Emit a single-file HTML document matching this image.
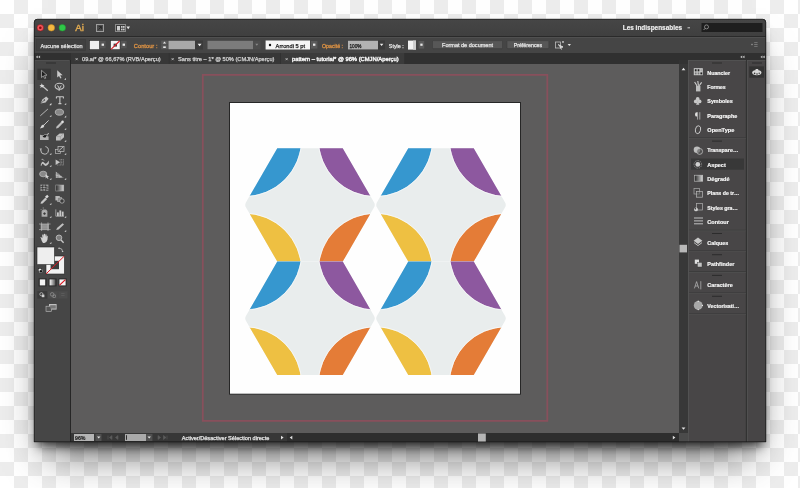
<!DOCTYPE html>
<html><head><meta charset="utf-8">
<style>
html,body{margin:0;padding:0;width:800px;height:488px;overflow:hidden;}
body{background-color:#fff;background-image:
linear-gradient(45deg,#ededed 25%,transparent 25%,transparent 75%,#ededed 75%),
linear-gradient(45deg,#ededed 25%,transparent 25%,transparent 75%,#ededed 75%);
background-size:28px 28px;background-position:0 0,14px 14px;position:relative;}
#shadow{position:absolute;left:34px;top:19px;width:732px;height:423px;
box-shadow:0 8px 10px -4px rgba(0,0,0,0.75), 0 24px 40px -14px rgba(0,0,0,0.65);background:#333;border-radius:4px 4px 0 0;}
svg{position:absolute;left:0;top:0;will-change:transform;}
</style></head><body>
<div id="shadow"></div>
<svg width="800" height="488" viewBox="0 0 800 488">
<defs>
<clipPath id="win"><path d="M34,22.5 Q34,19 37.5,19 L762.5,19 Q766,19 766,22.5 L766,442 L34,442 Z"/></clipPath>
<linearGradient id="tb" x1="0" y1="0" x2="0" y2="1"><stop offset="0" stop-color="#464646"/><stop offset="1" stop-color="#3f3f3f"/></linearGradient>
</defs>
<g clip-path="url(#win)">
<rect x="34" y="19" width="732" height="18" fill="url(#tb)" />
<rect x="34" y="19" width="732" height="1" fill="#5a5a5a" opacity="0.5"/>
<rect x="34" y="36" width="732" height="1" fill="#2a2a2a" />
<rect x="34" y="37" width="732" height="16" fill="#454545" />
<rect x="34" y="37" width="732" height="1" fill="#505050" />
<rect x="34" y="53" width="732" height="7" fill="#303030" />
<rect x="71" y="53" width="608" height="11" fill="#303030" />
<rect x="71" y="64" width="608" height="369" fill="#5d5c5c" />
<rect x="34" y="60" width="36" height="382" fill="#464646" />
<rect x="70" y="60" width="1" height="382" fill="#262626" />
<rect x="679" y="64" width="9" height="369" fill="#383838" />
<rect x="71" y="433" width="608" height="9" fill="#373737" />
<rect x="287" y="433" width="392" height="9" fill="#2e2e2e" />
<rect x="679" y="433" width="9" height="9" fill="#4b4b4b" />
<rect x="688" y="60" width="58" height="382" fill="#484647" />
<rect x="745.8" y="60" width="1.4" height="382" fill="#323232" />
<rect x="747" y="60" width="19" height="382" fill="#474546" />
<rect x="35" y="60" width="34" height="0.7" fill="#555555" />
<rect x="34.5" y="60" width="0.7" height="382" fill="#505050" />
<rect x="688" y="60" width="0.8" height="382" fill="#565656" />
<rect x="688" y="60" width="58" height="0.7" fill="#565656" />
<rect x="747" y="60" width="0.7" height="382" fill="#555555" />
<rect x="747" y="60" width="19" height="0.7" fill="#555555" />
</g>
<path d="M34.25,442 L34.25,22.5 Q34.25,19.25 37.5,19.25 L762.5,19.25 Q765.75,19.25 765.75,22.5 L765.75,442" fill="none" stroke="#1c1c1c" stroke-width="0.8"/>
<rect x="34" y="441.4" width="732" height="0.8" fill="#1c1c1c" />
<circle cx="40.3" cy="27.8" r="3.3" fill="#f2555a" stroke="#8a0c10" stroke-width="0.5"/>
<circle cx="51.3" cy="27.8" r="3.3" fill="#f5b841" stroke="#c98a1a" stroke-width="0.5"/>
<circle cx="62.3" cy="27.8" r="3.3" fill="#2fc748" stroke="#1c9a2f" stroke-width="0.5"/>
<circle cx="40.3" cy="27.8" r="1.3" fill="#8a0c10"/>
<text x="75.2" y="31.3" font-size="9.4" fill="#dca750" font-weight="normal" text-anchor="start" font-family="Liberation Sans" textLength="8.6" lengthAdjust="spacingAndGlyphs" stroke="#dca750" stroke-width="0.45">Ai</text>
<rect x="96.5" y="24.5" width="7" height="7" fill="#4a4a4a" stroke="#9c9c9c" stroke-width="1"/>
<path d="M98.4,29.6 L101.4,26.6 M98.8,26.6 L101.4,26.6 L101.4,29.2" stroke="#262626" stroke-width="0.9" fill="none"/>
<rect x="115.5" y="24.5" width="10" height="7" fill="#3a3a3a" stroke="#8a8a8a" stroke-width="1"/>
<rect x="117" y="26" width="3" height="4.5" fill="#cfcfcf"/>
<rect x="121" y="26" width="1.6" height="1.8" fill="#cfcfcf"/><rect x="123" y="26" width="1.6" height="1.8" fill="#cfcfcf"/>
<rect x="121" y="28.6" width="1.6" height="1.8" fill="#cfcfcf"/><rect x="123" y="28.6" width="1.6" height="1.8" fill="#cfcfcf"/>
<path d="M126.4,26.6 L130,26.6 L128.2,29.2 Z" fill="#e6e6e6"/>
<text x="622.7" y="30" font-size="6.4" fill="#f0f0f0" font-weight="bold" text-anchor="start" font-family="Liberation Sans" textLength="59.5" lengthAdjust="spacingAndGlyphs" stroke="#f0f0f0" stroke-width="0.15">Les indispensables</text>
<rect x="687.5" y="27.3" width="2.5" height="1" fill="#cccccc"/>
<rect x="701.5" y="23" width="61" height="9" fill="#1e1e1e"/>
<circle cx="706.5" cy="26.9" r="2" fill="none" stroke="#9a9a9a" stroke-width="0.8"/><path d="M705,28.4 L703.6,30" stroke="#9a9a9a" stroke-width="0.9"/>
<rect x="36.5" y="39.5" width="49" height="11" fill="#404040" stroke="#3c3c3c" stroke-width="0.8"/>
<text x="40.6" y="47.6" font-size="5.9" fill="#e4e4e4" font-weight="normal" text-anchor="start" font-family="Liberation Sans" textLength="42" lengthAdjust="spacingAndGlyphs" stroke="#e4e4e4" stroke-width="0.25">Aucune sélection</text>
<rect x="89.5" y="40.5" width="10" height="9.2" fill="#efefef" stroke="#2a2a2a" stroke-width="0.6"/>
<rect x="100" y="41" width="5.6" height="7.3" fill="#555"/><rect x="101.6" y="43.6" width="2.4" height="2.2" fill="#e8e8e8"/>
<rect x="110.5" y="40.5" width="9.6" height="9.2" fill="#f4f4f4" stroke="#2a2a2a" stroke-width="0.6"/>
<rect x="113.6" y="43.6" width="3.4" height="3" fill="#444"/>
<path d="M111,49.3 L119.6,41" stroke="#d8202a" stroke-width="1.1"/>
<rect x="121" y="41" width="5.6" height="7.3" fill="#555"/><rect x="122.6" y="43.6" width="2.4" height="2.2" fill="#e8e8e8"/>
<text x="133.8" y="47.6" font-size="5.9" fill="#dc9244" font-weight="normal" text-anchor="start" font-family="Liberation Sans" textLength="23.7" lengthAdjust="spacingAndGlyphs" stroke="#dc9244" stroke-width="0.3">Contour :</text>
<rect x="161.2" y="40.6" width="6.6" height="4" fill="#5a5a5a"/><rect x="161.2" y="45.2" width="6.6" height="4" fill="#5a5a5a"/>
<path d="M162.9,43.6 L166.1,43.6 L164.5,41.6 Z" fill="#e8e8e8"/><rect x="163.2" y="46.4" width="2.6" height="1.6" fill="#e8e8e8"/>
<rect x="168.5" y="40.8" width="26.6" height="8.4" fill="#a9a9a9" />
<rect x="195" y="40.5" width="8" height="9" fill="#3b3b3b" />
<path d="M197.6,43.8 L201.6,43.8 L199.6,46.2 Z" fill="#f0f0f0"/>
<rect x="207.5" y="40.8" width="45.5" height="8.4" fill="#7c7c7c" />
<rect x="253" y="40.5" width="7.6" height="9" fill="#4d4d4d" />
<path d="M255.3,43.8 L258.3,43.8 L256.8,45.8 Z" fill="#8a8a8a"/>
<rect x="265.6" y="40.5" width="44.4" height="9" fill="#f6f6f6" />
<circle cx="270" cy="45" r="1.2" fill="#111"/>
<text x="275.6" y="47.7" font-size="5.9" fill="#1a1a1a" font-weight="normal" text-anchor="start" font-family="Liberation Sans" textLength="29.5" lengthAdjust="spacingAndGlyphs" stroke="#1a1a1a" stroke-width="0.25">Arrondi 5 pt</text>
<rect x="311" y="41" width="6.4" height="7.6" fill="#5a5a5a" />
<rect x="313" y="43.6" width="2.4" height="2.2" fill="#e8e8e8"/>
<text x="322" y="47.7" font-size="5.9" fill="#dc9244" font-weight="normal" text-anchor="start" font-family="Liberation Sans" textLength="21" lengthAdjust="spacingAndGlyphs" stroke="#dc9244" stroke-width="0.3">Opacité :</text>
<rect x="348" y="40.8" width="30" height="8.6" fill="#b3b3b3" />
<text x="349.5" y="47.7" font-size="5.9" fill="#111" font-weight="normal" text-anchor="start" font-family="Liberation Sans" textLength="12" lengthAdjust="spacingAndGlyphs" stroke="#111" stroke-width="0.25">100%</text>
<rect x="378" y="40.5" width="7" height="9" fill="#3b3b3b" />
<path d="M379.8,43.8 L383.4,43.8 L381.6,46 Z" fill="#f0f0f0"/>
<text x="388.8" y="47.7" font-size="5.9" fill="#e4e4e4" font-weight="normal" text-anchor="start" font-family="Liberation Sans" textLength="15" lengthAdjust="spacingAndGlyphs" stroke="#e4e4e4" stroke-width="0.25">Style :</text>
<rect x="408" y="40.6" width="8" height="9" fill="#f2f2f2"/><rect x="413" y="40.6" width="3" height="9" fill="#cfcfcf"/>
<rect x="418.6" y="41" width="5.6" height="7.6" fill="#5a5a5a" />
<rect x="420.3" y="43.6" width="2.3" height="2.2" fill="#e8e8e8"/>
<rect x="432.5" y="40.6" width="70" height="8" rx="0.8" fill="#575757" stroke="#3a3a3a" stroke-width="0.5"/>
<text x="467.5" y="47.4" font-size="5.9" fill="#e6e6e6" font-weight="normal" text-anchor="middle" font-family="Liberation Sans" textLength="51" lengthAdjust="spacingAndGlyphs" stroke="#e6e6e6" stroke-width="0.25">Format de document</text>
<rect x="507" y="40.6" width="41.8" height="8" rx="0.8" fill="#575757" stroke="#3a3a3a" stroke-width="0.5"/>
<text x="527.9" y="47.4" font-size="5.9" fill="#e6e6e6" font-weight="normal" text-anchor="middle" font-family="Liberation Sans" textLength="28.5" lengthAdjust="spacingAndGlyphs" stroke="#e6e6e6" stroke-width="0.25">Préférences</text>
<rect x="555.5" y="42" width="5" height="6" fill="none" stroke="#bdbdbd" stroke-width="0.8"/><path d="M558,44.5 L563,47 L560.5,47.5 L561.5,49.5" stroke="#e0e0e0" stroke-width="0.9" fill="#cfcfcf"/>
<rect x="562" y="41.2" width="2" height="1.5" fill="#bdbdbd"/>
<path d="M567.6,44 L571,44 L569.3,46 Z" fill="#e0e0e0"/>
<path d="M751,44.5 L753,44.5 M754.2,42.6 L757.6,42.6 M754.2,44.5 L757.6,44.5 M754.2,46.4 L757.6,46.4 M752,43.6 L752,45.4" stroke="#8c8c8c" stroke-width="0.7"/>
<rect x="71" y="53" width="98.5" height="11" fill="#373737" />
<rect x="168.9" y="53" width="0.6" height="11" fill="#2e2e2e" />
<path d="M75.6,58.1 L77.7,60.2 M77.7,58.1 L75.6,60.2" stroke="#cfcfcf" stroke-width="0.75"/>
<text x="82" y="61.3" font-size="5.7" fill="#d4d4d4" font-weight="normal" text-anchor="start" font-family="Liberation Sans" textLength="78.7" lengthAdjust="spacingAndGlyphs" stroke="#d4d4d4" stroke-width="0.25">09.ai* @ 66,67% (RVB/Aperçu)</text>
<rect x="169.5" y="53" width="111.5" height="11" fill="#373737" />
<rect x="280.4" y="53" width="0.6" height="11" fill="#2e2e2e" />
<path d="M171.6,58.1 L173.7,60.2 M173.7,58.1 L171.6,60.2" stroke="#cfcfcf" stroke-width="0.75"/>
<text x="178" y="61.3" font-size="5.7" fill="#d4d4d4" font-weight="normal" text-anchor="start" font-family="Liberation Sans" textLength="96.5" lengthAdjust="spacingAndGlyphs" stroke="#d4d4d4" stroke-width="0.25">Sans titre – 1* @ 50% (CMJN/Aperçu)</text>
<rect x="281" y="53" width="124" height="11" fill="#3b3b3b" />
<rect x="404.4" y="53" width="0.6" height="11" fill="#2e2e2e" />
<path d="M285.6,58.1 L287.7,60.2 M287.7,58.1 L285.6,60.2" stroke="#cfcfcf" stroke-width="0.75"/>
<text x="292" y="61.3" font-size="5.7" fill="#f4f4f4" font-weight="normal" text-anchor="start" font-family="Liberation Sans" textLength="106.7" lengthAdjust="spacingAndGlyphs" stroke="#f4f4f4" stroke-width="0.4">pattern – tutorial* @ 96% (CMJN/Aperçu)</text>
<path d="M35.8,56.9 L37.8,55.5 L37.8,58.3 Z M38.099999999999994,56.9 L40.099999999999994,55.5 L40.099999999999994,58.3 Z" fill="#c4c4c4"/>
<path d="M740.2,56.9 L742.2,55.5 L742.2,58.3 Z M742.5,56.9 L744.5,55.5 L744.5,58.3 Z" fill="#c4c4c4"/>
<path d="M760.4,56.9 L762.4,55.5 L762.4,58.3 Z M762.6999999999999,56.9 L764.6999999999999,55.5 L764.6999999999999,58.3 Z" fill="#c4c4c4"/>
<rect x="46" y="62.5" width="10" height="1" fill="#2c2c2c" />
<rect x="712" y="62.5" width="10" height="1" fill="#2c2c2c" />
<rect x="752" y="62.5" width="10" height="1" fill="#2c2c2c" />
<rect x="74" y="434" width="20" height="7" fill="#b4b4b4" />
<text x="75" y="440.4" font-size="5.6" fill="#1a1a1a" font-weight="bold" text-anchor="start" font-family="Liberation Sans" textLength="10.5" lengthAdjust="spacingAndGlyphs" stroke="#1a1a1a" stroke-width="0.12">96%</text>
<rect x="95.5" y="434" width="6" height="7" fill="#505050" />
<path d="M97,436.5 L100.4,436.5 L98.7,438.6 Z" fill="#e0e0e0"/>
<path d="M108,435.5 L108,439.5 M112,435.5 L109.5,437.5 L112,439.5 Z M118,435.5 L115.5,437.5 L118,439.5 Z" stroke="#5c5c5c" stroke-width="0.6" fill="#5c5c5c"/>
<rect x="125" y="434" width="21" height="7" fill="#aaaaaa" />
<rect x="126.2" y="435.2" width="0.8" height="4.6" fill="#111"/>
<rect x="146" y="434" width="6.4" height="7" fill="#505050" />
<path d="M147.5,436.5 L150.9,436.5 L149.2,438.6 Z" fill="#e0e0e0"/>
<path d="M158,435.5 L160.5,437.5 L158,439.5 Z M163.5,435.5 L166,437.5 L163.5,439.5 Z M167,435.5 L167,439.5" stroke="#5c5c5c" stroke-width="0.6" fill="#5c5c5c"/>
<text x="181.7" y="440.2" font-size="5.6" fill="#e6e6e6" font-weight="normal" text-anchor="start" font-family="Liberation Sans" textLength="87.6" lengthAdjust="spacingAndGlyphs" stroke="#e6e6e6" stroke-width="0.25">Activer/Désactiver Sélection directe</text>
<path d="M281,435.8 L283.6,437.6 L281,439.4 Z" fill="#e0e0e0"/>
<path d="M292.3,435.8 L289.7,437.6 L292.3,439.4 Z" fill="#e0e0e0"/>
<path d="M672.8,435.8 L675.4,437.6 L672.8,439.4 Z" fill="#e0e0e0"/>
<rect x="478" y="433.5" width="7.8" height="8" fill="#b5b5b5" />
<path d="M681.6,70.2 L685.4,70.2 L683.5,67.8 Z" fill="#e6e6e6"/>
<path d="M681.6,427.4 L685.4,427.4 L683.5,429.8 Z" fill="#e6e6e6"/>
<rect x="679.5" y="244.8" width="7.5" height="7.6" fill="#b8b8b8" />
<rect x="691" y="158.5" width="53" height="11.2" fill="#383838" />
<text x="707.3" y="74.69999999999999" font-size="5.9" fill="#f6f6f6" font-weight="bold" text-anchor="start" font-family="Liberation Sans" textLength="22.8" lengthAdjust="spacingAndGlyphs" stroke="#f6f6f6" stroke-width="0.2">Nuancier</text>
<text x="707.3" y="88.89999999999999" font-size="5.9" fill="#f6f6f6" font-weight="bold" text-anchor="start" font-family="Liberation Sans" textLength="18.4" lengthAdjust="spacingAndGlyphs" stroke="#f6f6f6" stroke-width="0.2">Formes</text>
<text x="707.3" y="103.39999999999999" font-size="5.9" fill="#f6f6f6" font-weight="bold" text-anchor="start" font-family="Liberation Sans" textLength="25.4" lengthAdjust="spacingAndGlyphs" stroke="#f6f6f6" stroke-width="0.2">Symboles</text>
<text x="707.3" y="117.6" font-size="5.9" fill="#f6f6f6" font-weight="bold" text-anchor="start" font-family="Liberation Sans" textLength="30" lengthAdjust="spacingAndGlyphs" stroke="#f6f6f6" stroke-width="0.2">Paragraphe</text>
<text x="707.3" y="131.79999999999998" font-size="5.9" fill="#f6f6f6" font-weight="bold" text-anchor="start" font-family="Liberation Sans" textLength="27" lengthAdjust="spacingAndGlyphs" stroke="#f6f6f6" stroke-width="0.2">OpenType</text>
<text x="707.3" y="152.4" font-size="5.9" fill="#f6f6f6" font-weight="bold" text-anchor="start" font-family="Liberation Sans" textLength="31" lengthAdjust="spacingAndGlyphs" stroke="#f6f6f6" stroke-width="0.2">Transpare…</text>
<text x="707.3" y="167.1" font-size="5.9" fill="#f6f6f6" font-weight="bold" text-anchor="start" font-family="Liberation Sans" textLength="18.5" lengthAdjust="spacingAndGlyphs" stroke="#f6f6f6" stroke-width="0.2">Aspect</text>
<text x="707.3" y="180.79999999999998" font-size="5.9" fill="#f6f6f6" font-weight="bold" text-anchor="start" font-family="Liberation Sans" textLength="22.3" lengthAdjust="spacingAndGlyphs" stroke="#f6f6f6" stroke-width="0.2">Dégradé</text>
<text x="707.3" y="195.4" font-size="5.9" fill="#f6f6f6" font-weight="bold" text-anchor="start" font-family="Liberation Sans" textLength="32" lengthAdjust="spacingAndGlyphs" stroke="#f6f6f6" stroke-width="0.2">Plans de tr…</text>
<text x="707.3" y="210.1" font-size="5.9" fill="#f6f6f6" font-weight="bold" text-anchor="start" font-family="Liberation Sans" textLength="30.5" lengthAdjust="spacingAndGlyphs" stroke="#f6f6f6" stroke-width="0.2">Styles gra…</text>
<text x="707.3" y="223.79999999999998" font-size="5.9" fill="#f6f6f6" font-weight="bold" text-anchor="start" font-family="Liberation Sans" textLength="21.5" lengthAdjust="spacingAndGlyphs" stroke="#f6f6f6" stroke-width="0.2">Contour</text>
<text x="707.3" y="244.7" font-size="5.9" fill="#f6f6f6" font-weight="bold" text-anchor="start" font-family="Liberation Sans" textLength="21" lengthAdjust="spacingAndGlyphs" stroke="#f6f6f6" stroke-width="0.2">Calques</text>
<text x="707.3" y="265.8" font-size="5.9" fill="#f6f6f6" font-weight="bold" text-anchor="start" font-family="Liberation Sans" textLength="27" lengthAdjust="spacingAndGlyphs" stroke="#f6f6f6" stroke-width="0.2">Pathfinder</text>
<text x="707.3" y="286.70000000000005" font-size="5.9" fill="#f6f6f6" font-weight="bold" text-anchor="start" font-family="Liberation Sans" textLength="25.4" lengthAdjust="spacingAndGlyphs" stroke="#f6f6f6" stroke-width="0.2">Caractère</text>
<text x="707.3" y="307.8" font-size="5.9" fill="#f6f6f6" font-weight="bold" text-anchor="start" font-family="Liberation Sans" textLength="32" lengthAdjust="spacingAndGlyphs" stroke="#f6f6f6" stroke-width="0.2">Vectorisati…</text>
<rect x="689" y="137.4" width="57" height="0.8" fill="#3a3a3a" />
<rect x="689" y="138.20000000000002" width="57" height="0.6" fill="#525252" />
<rect x="689" y="229.8" width="57" height="0.8" fill="#3a3a3a" />
<rect x="689" y="230.60000000000002" width="57" height="0.6" fill="#525252" />
<rect x="689" y="250.4" width="57" height="0.8" fill="#3a3a3a" />
<rect x="689" y="251.20000000000002" width="57" height="0.6" fill="#525252" />
<rect x="689" y="271.2" width="57" height="0.8" fill="#3a3a3a" />
<rect x="689" y="272.0" width="57" height="0.6" fill="#525252" />
<rect x="689" y="292.4" width="57" height="0.8" fill="#3a3a3a" />
<rect x="689" y="293.2" width="57" height="0.6" fill="#525252" />
<rect x="689" y="313.4" width="57" height="0.8" fill="#3a3a3a" />
<rect x="689" y="314.2" width="57" height="0.6" fill="#525252" />
<rect x="712" y="140.6" width="10" height="1" fill="#2c2c2c" />
<rect x="712" y="233" width="10" height="1" fill="#2c2c2c" />
<rect x="712" y="254.2" width="10" height="1" fill="#2c2c2c" />
<rect x="712" y="274.9" width="10" height="1" fill="#2c2c2c" />
<rect x="712" y="295.8" width="10" height="1" fill="#2c2c2c" />
<rect x="749.2" y="66.4" width="14.8" height="11.3" fill="#333333" />
<ellipse cx="756.8" cy="72.6" rx="4.6" ry="2.7" fill="#d8d8d8"/>
<circle cx="754.6" cy="73.4" r="0.8" fill="#333"/><circle cx="757" cy="74" r="0.8" fill="#333"/><circle cx="759.2" cy="73.2" r="0.7" fill="#333"/>
<rect x="755.6" y="69" width="2.6" height="2.4" fill="#d8d8d8"/>
<rect x="693.8" y="68.2" width="9" height="7" fill="#cfcfcf"/>
<rect x="694.8" y="69.2" width="1.8" height="2.2" fill="#222"/>
<rect x="694.8" y="72.4" width="1.8" height="2" fill="#777"/>
<rect x="697.6" y="69.2" width="1.8" height="2.2" fill="#222"/>
<rect x="697.6" y="72.4" width="1.8" height="2" fill="#777"/>
<rect x="700.4" y="69.2" width="1.8" height="2.2" fill="#aaa"/>
<rect x="700.4" y="72.4" width="1.8" height="2" fill="#222"/>
<path d="M694.6,82 Q696,84 697,86 M697.8,81 L698.4,85.6 M701.6,82.4 L699.2,85.8" stroke="#cfcfcf" stroke-width="1.1" fill="none"/>
<rect x="696" y="86" width="4.4" height="5.4" fill="#bdbdbd"/>
<circle cx="697.7" cy="99" r="1.9" fill="#c8c8c8"/><circle cx="695.8" cy="101.4" r="1.9" fill="#c8c8c8"/><circle cx="699.6" cy="101.4" r="1.9" fill="#c8c8c8"/><path d="M697.7,101 L696,104.8 L699.4,104.8 Z" fill="#c8c8c8"/>
<path d="M697.6,112.2 L697.6,119.6 M699.8,112.2 L699.8,119.6" stroke="#bdbdbd" stroke-width="0.8"/><path d="M695,114.4 A2,2.2 0 0 1 697.2,112.2 L697.2,116.6 A2,2.2 0 0 1 695,114.4 Z" fill="#e0e0e0"/>
<ellipse cx="698" cy="129.7" rx="2.6" ry="4" fill="none" stroke="#c8c8c8" stroke-width="0.9" transform="rotate(12 698 129.7)"/>
<circle cx="697" cy="149.8" r="3.3" fill="#bdbdbd"/><circle cx="699.6" cy="151.4" r="3" fill="#555" fill-opacity="0.6" stroke="#c8c8c8" stroke-width="0.7"/>
<circle cx="697.8" cy="164.4" r="3.8" fill="none" stroke="#aaa" stroke-width="0.8" stroke-dasharray="0.9,0.9"/><circle cx="697.8" cy="164.4" r="2.4" fill="#cfcfcf"/>
<defs><linearGradient id="gpan" x1="0" x2="1"><stop offset="0" stop-color="#1e1e1e"/><stop offset="1" stop-color="#dcdcdc"/></linearGradient></defs><rect x="694.3" y="175.2" width="8.4" height="6" fill="url(#gpan)" stroke="#c4c4c4" stroke-width="0.6"/>
<rect x="694" y="188.6" width="5.6" height="5.4" fill="none" stroke="#a8a8a8" stroke-width="0.7"/><rect x="696.6" y="191.6" width="6" height="5.6" fill="#555" fill-opacity="0.5" stroke="#b8b8b8" stroke-width="0.7"/>
<rect x="696.4" y="203.6" width="6" height="6.4" fill="none" stroke="#b0b0b0" stroke-width="0.7"/><circle cx="696" cy="209.4" r="1.9" fill="#cfcfcf"/><circle cx="695.4" cy="208.8" r="0.7" fill="#333"/>
<path d="M694,218 L703,218 M694,220.9 L703,220.9 M694,223.8 L703,223.8" stroke="#cfcfcf" stroke-width="0.9"/>
<path d="M698,237.6 L702.4,240.8 L698,244 L693.6,240.8 Z" fill="#c8c8c8"/><path d="M694,242.6 L698,245.6 L702,242.6" stroke="#c8c8c8" stroke-width="0.9" fill="none"/>
<rect x="694.8" y="259.6" width="4.2" height="4.2" fill="#e0e0e0"/><rect x="697.4" y="262.4" width="4.6" height="4.6" fill="#c4c4c4" stroke="#333" stroke-width="0.4"/>
<path d="M694.4,288.4 L696.6,281.6 L698.8,288.4 M695.2,286 L698,286 M700.8,281.2 L700.8,289.4" stroke="#bdbdbd" stroke-width="0.7" fill="none"/>
<circle cx="698.2" cy="305.4" r="4.4" fill="#a8a8a8"/><circle cx="698.2" cy="301.2" r="0.7" fill="#eee"/><circle cx="698.2" cy="309.6" r="0.7" fill="#eee"/><circle cx="702.4" cy="305.4" r="0.6" fill="#eee"/>
<rect x="202.8" y="74.9" width="344.5" height="346" fill="none" stroke="#88505c" stroke-width="1.8"/>
<rect x="229.5" y="102.5" width="291" height="291.7" fill="#fefefe" stroke="#262626" stroke-width="1"/>
<clipPath id="hx1"><path d="M374.10,207.32 L342.75,261.62 L277.25,261.62 L245.90,207.32 Q244.50,204.90 245.90,202.48 L277.25,148.18 L342.75,148.18 L374.10,202.48 Q375.50,204.90 374.10,207.32 Z"/></clipPath>
<g clip-path="url(#hx1)">
<rect x="244.5" y="139.4" width="131.0" height="131.0" fill="#e9eded"/>
<circle cx="244.50" cy="139.40" r="56.72" fill="#3697cf"/>
<circle cx="244.50" cy="139.40" r="57.17" fill="none" stroke="#ffffff" stroke-width="0.7" opacity="0.9"/>
<circle cx="375.50" cy="139.40" r="56.72" fill="#8d589f"/>
<circle cx="375.50" cy="139.40" r="57.17" fill="none" stroke="#ffffff" stroke-width="0.7" opacity="0.9"/>
<circle cx="244.50" cy="270.40" r="56.72" fill="#eec042"/>
<circle cx="244.50" cy="270.40" r="57.17" fill="none" stroke="#ffffff" stroke-width="0.7" opacity="0.9"/>
<circle cx="375.50" cy="270.40" r="56.72" fill="#e47c37"/>
<circle cx="375.50" cy="270.40" r="57.17" fill="none" stroke="#ffffff" stroke-width="0.7" opacity="0.9"/>
</g>
<clipPath id="hx2"><path d="M505.10,207.32 L473.75,261.62 L408.25,261.62 L376.90,207.32 Q375.50,204.90 376.90,202.48 L408.25,148.18 L473.75,148.18 L505.10,202.48 Q506.50,204.90 505.10,207.32 Z"/></clipPath>
<g clip-path="url(#hx2)">
<rect x="375.5" y="139.4" width="131.0" height="131.0" fill="#e9eded"/>
<circle cx="375.50" cy="139.40" r="56.72" fill="#3697cf"/>
<circle cx="375.50" cy="139.40" r="57.17" fill="none" stroke="#ffffff" stroke-width="0.7" opacity="0.9"/>
<circle cx="506.50" cy="139.40" r="56.72" fill="#8d589f"/>
<circle cx="506.50" cy="139.40" r="57.17" fill="none" stroke="#ffffff" stroke-width="0.7" opacity="0.9"/>
<circle cx="375.50" cy="270.40" r="56.72" fill="#eec042"/>
<circle cx="375.50" cy="270.40" r="57.17" fill="none" stroke="#ffffff" stroke-width="0.7" opacity="0.9"/>
<circle cx="506.50" cy="270.40" r="56.72" fill="#e47c37"/>
<circle cx="506.50" cy="270.40" r="57.17" fill="none" stroke="#ffffff" stroke-width="0.7" opacity="0.9"/>
</g>
<clipPath id="hx3"><path d="M374.10,320.77 L342.75,375.07 L277.25,375.07 L245.90,320.77 Q244.50,318.35 245.90,315.92 L277.25,261.62 L342.75,261.62 L374.10,315.92 Q375.50,318.35 374.10,320.77 Z"/></clipPath>
<g clip-path="url(#hx3)">
<rect x="244.5" y="252.84932789576146" width="131.0" height="131.0" fill="#e9eded"/>
<circle cx="244.50" cy="252.85" r="56.72" fill="#3697cf"/>
<circle cx="244.50" cy="252.85" r="57.17" fill="none" stroke="#ffffff" stroke-width="0.7" opacity="0.9"/>
<circle cx="375.50" cy="252.85" r="56.72" fill="#8d589f"/>
<circle cx="375.50" cy="252.85" r="57.17" fill="none" stroke="#ffffff" stroke-width="0.7" opacity="0.9"/>
<circle cx="244.50" cy="383.85" r="56.72" fill="#eec042"/>
<circle cx="244.50" cy="383.85" r="57.17" fill="none" stroke="#ffffff" stroke-width="0.7" opacity="0.9"/>
<circle cx="375.50" cy="383.85" r="56.72" fill="#e47c37"/>
<circle cx="375.50" cy="383.85" r="57.17" fill="none" stroke="#ffffff" stroke-width="0.7" opacity="0.9"/>
</g>
<clipPath id="hx4"><path d="M505.10,320.77 L473.75,375.07 L408.25,375.07 L376.90,320.77 Q375.50,318.35 376.90,315.92 L408.25,261.62 L473.75,261.62 L505.10,315.92 Q506.50,318.35 505.10,320.77 Z"/></clipPath>
<g clip-path="url(#hx4)">
<rect x="375.5" y="252.84932789576146" width="131.0" height="131.0" fill="#e9eded"/>
<circle cx="375.50" cy="252.85" r="56.72" fill="#3697cf"/>
<circle cx="375.50" cy="252.85" r="57.17" fill="none" stroke="#ffffff" stroke-width="0.7" opacity="0.9"/>
<circle cx="506.50" cy="252.85" r="56.72" fill="#8d589f"/>
<circle cx="506.50" cy="252.85" r="57.17" fill="none" stroke="#ffffff" stroke-width="0.7" opacity="0.9"/>
<circle cx="375.50" cy="383.85" r="56.72" fill="#eec042"/>
<circle cx="375.50" cy="383.85" r="57.17" fill="none" stroke="#ffffff" stroke-width="0.7" opacity="0.9"/>
<circle cx="506.50" cy="383.85" r="56.72" fill="#e47c37"/>
<circle cx="506.50" cy="383.85" r="57.17" fill="none" stroke="#ffffff" stroke-width="0.7" opacity="0.9"/>
</g>
<g id="tools">
<!-- selected box -->
<rect x="37.4" y="68.7" width="13.4" height="11.3" fill="#363636"/>
<!-- selection arrow -->
<path d="M41.5,70.3 L41.5,77.6 L43.3,75.9 L44.7,78.6 L45.8,78.1 L44.5,75.3 L47,75.2 Z" fill="#1d1d1d" stroke="#b9b9b9" stroke-width="0.7"/>
<!-- direct selection -->
<path d="M57.2,70.3 L57.2,77.6 L59,75.9 L60.4,78.6 L61.5,78.1 L60.2,75.3 L62.7,75.2 Z" fill="#c9c9c9"/>
<path d="M64.2,79.8 L66.0,78.0 L66.0,79.8 Z" fill="#dedede"/>
<!-- magic wand -->
<path d="M42.5,86 L47.8,90.8" stroke="#c4c4c4" stroke-width="1.2"/>
<path d="M41.8,83.2 L42.6,85 L44.5,85 L43,86.2 L43.6,88 L41.9,86.9 L40.3,88 L40.8,86.2 L39.4,85 L41.1,85 Z" fill="#d6d6d6"/>
<!-- lasso -->
<ellipse cx="59.5" cy="86.3" rx="4.4" ry="3" fill="none" stroke="#c4c4c4" stroke-width="1.1"/>
<path d="M57.6,85.3 L59.4,88.8 L61.2,85.6 M59.4,88.8 L59,91" stroke="#c4c4c4" stroke-width="1" fill="none"/>
<!-- pen -->
<path d="M40.6,103.6 L42.4,99.4 L46.2,96.4 L48.6,98.8 L45.6,102.6 Z" fill="#c2c2c2"/>
<path d="M40.8,103.4 L44,100.4" stroke="#3a3a3a" stroke-width="0.6"/>
<circle cx="44.4" cy="100" r="0.7" fill="#3a3a3a"/>
<path d="M49.6,104.8 L51.4,103.0 L51.4,104.8 Z" fill="#dedede"/>
<!-- type -->
<path d="M56.2,96.8 L63.6,96.8 M59.9,96.8 L59.9,103.6 M58.4,103.6 L61.4,103.6 M56.4,96.8 L56.4,98.4 M63.4,96.8 L63.4,98.4" stroke="#c8c8c8" stroke-width="1.1" fill="none"/>
<path d="M64.4,104.8 L66.2,103.0 L66.2,104.8 Z" fill="#dedede"/>
<!-- line -->
<path d="M40.3,115.8 L47.9,109" stroke="#c0c0c0" stroke-width="0.9"/>
<path d="M49.4,105.2 L51.2,103.4 L51.2,105.2 Z" fill="#dedede"/>
<!-- ellipse -->
<ellipse cx="59.4" cy="112.2" rx="4.1" ry="3" fill="#888" stroke="#c2c2c2" stroke-width="0.8"/>
<path d="M64.4,117.4 L66.2,115.6 L66.2,117.4 Z" fill="#dedede"/>
<!-- paintbrush -->
<path d="M43.4,125.6 L48.6,120.4" stroke="#c4c4c4" stroke-width="1"/>
<path d="M40,128.4 L41.6,125.4 L43.2,124.6 L44.4,125.8 L43.4,127.4 Z" fill="#d8d8d8"/>
<path d="M49.6,116.8 L51.4,115.0 L51.4,116.8 Z" fill="#dedede"/>
<!-- pencil -->
<path d="M56,128.6 L56.6,126.4 L62,121 L63.6,122.6 L58.2,128 Z" fill="#bdbdbd"/>
<circle cx="62.6" cy="121.8" r="1.2" fill="#e2e2e2"/>
<path d="M64.4,129.8 L66.2,128.0 L66.2,129.8 Z" fill="#dedede"/>
<!-- blob brush -->
<path d="M40,134.8 L40,140 L48.6,140 L48.6,136.4 Z" fill="#b0b0b0"/>
<path d="M42,136.6 Q44.5,133.6 47.6,134.6 L48.6,133 L45.8,137.8 Q43.8,138.6 42,136.6 Z" fill="#1e1e1e" stroke="#cfcfcf" stroke-width="0.6"/>
<!-- eraser -->
<path d="M56,136.6 L59.6,133.4 L64,133.4 L64,137.2 L60.4,140.4 L56,140.4 Z" fill="#c0c0c0"/>
<path d="M56,136.6 L60.4,136.6 L64,133.4 M60.4,136.6 L60.4,140.4" stroke="#8a8a8a" stroke-width="0.5" fill="none"/>
<path d="M64.4,141.8 L66.2,140.0 L66.2,141.8 Z" fill="#dedede"/>
<!-- rotate -->
<path d="M45.4,146.6 A3.8,3.8 0 1 1 40.8,150" stroke="#c0c0c0" stroke-width="1" fill="none"/>
<path d="M39.6,148.4 L42,148.4 L40.8,150.8 Z" fill="#c0c0c0"/>
<path d="M49.6,154.8 L51.4,153.0 L51.4,154.8 Z" fill="#dedede"/>
<!-- scale -->
<rect x="55.6" y="149.4" width="5" height="4" fill="none" stroke="#b8b8b8" stroke-width="0.7"/>
<rect x="58" y="146.4" width="6" height="5" fill="#4a4a4a" stroke="#c4c4c4" stroke-width="0.7"/>
<path d="M59,150.6 L63,147" stroke="#cfcfcf" stroke-width="0.8"/>
<path d="M64.4,154.8 L66.2,153.0 L66.2,154.8 Z" fill="#dedede"/>
<!-- width -->
<path d="M40.6,165.4 Q42,160 44,162.6 Q46,165.6 48.8,160.6 L48.8,163.6 Q46,167.6 43.6,164.6 Q42,162.4 41.6,165.8 Z" fill="#c4c4c4"/>
<path d="M41.6,159.4 Q43,158.6 44,160.6" stroke="#c4c4c4" stroke-width="0.8" fill="none"/>
<path d="M49.6,166.8 L51.4,165.0 L51.4,166.8 Z" fill="#dedede"/>
<!-- free transform -->
<path d="M55.6,159.6 L55.6,165 L60,162.3 Z" fill="#c4c4c4"/>
<path d="M59.4,159.6 L64,159.6 M59.4,162.3 L64,162.3 M57,165 L64,165 M61,159.6 L61,165 M63.4,159.6 L63.4,165" stroke="#a8a8a8" stroke-width="0.6" stroke-dasharray="1,0.6" fill="none"/>
<!-- shape builder -->
<ellipse cx="43.2" cy="174" rx="3.6" ry="2.8" fill="#888" stroke="#c2c2c2" stroke-width="0.7"/>
<path d="M45.6,174.2 L45.6,178.6 L46.8,177.4 L47.8,179 L48.4,178.6 L47.6,177 L49.2,177 Z" fill="#d4d4d4"/>
<path d="M49.6,179.8 L51.4,178.0 L51.4,179.8 Z" fill="#dedede"/>
<!-- perspective grid -->
<path d="M55.6,171.6 L55.6,178 L64,178 Z" fill="#7a7a7a"/>
<path d="M56.6,172 L56.6,178 M58,173.4 L58,178 M59.4,174.6 L59.4,178 M60.8,175.8 L60.8,178 M55.6,175 L62,177" stroke="#cfcfcf" stroke-width="0.6"/>
<path d="M64.4,179.8 L66.2,178.0 L66.2,179.8 Z" fill="#dedede"/>
<!-- mesh -->
<rect x="40.4" y="184.6" width="8" height="6.2" fill="#9c9c9c"/>
<path d="M40.4,186.6 Q44,185.4 48.4,187.2 M40.4,188.8 Q44,188 48.4,189.4 M42.8,184.6 Q42,187.6 43,190.8 M45.6,184.6 Q46.4,187.6 45.6,190.8" stroke="#262626" stroke-width="0.7" fill="none"/>
<!-- gradient -->
<defs><linearGradient id="gtool" x1="0" x2="1"><stop offset="0" stop-color="#2a2a2a"/><stop offset="1" stop-color="#d8d8d8"/></linearGradient></defs>
<rect x="55.8" y="185" width="8" height="6" fill="url(#gtool)" stroke="#b0b0b0" stroke-width="0.5"/>
<!-- eyedropper -->
<path d="M40.6,203.8 L41,202 L45.4,197.6 L47,199.2 L42.6,203.6 Z" fill="#c6c6c6"/>
<path d="M45,196.8 L47.2,194.8 L48.8,196.4 L46.8,198.6 Z" fill="#d8d8d8"/>
<path d="M49.6,204.8 L51.4,203.0 L51.4,204.8 Z" fill="#dedede"/>
<!-- blend -->
<rect x="55.4" y="196" width="4.4" height="4.4" fill="#b8b8b8"/>
<rect x="57.6" y="197.6" width="4" height="4" fill="#8a8a8a" stroke="#c4c4c4" stroke-width="0.5"/>
<circle cx="62" cy="201" r="2.2" fill="#3a3a3a" stroke="#c4c4c4" stroke-width="0.7"/>
<!-- symbol sprayer -->
<path d="M41.6,211 L41.6,216.8 L47.4,216.8 L47.4,211 L46,209.4 L43,209.4 Z" fill="#aaa"/>
<circle cx="44.5" cy="213.6" r="1.6" fill="#3a3a3a" stroke="#d0d0d0" stroke-width="0.6"/>
<path d="M42.6,208 L44,208 M40.6,209.6 L41.6,209.6" stroke="#bbb" stroke-width="0.6"/>
<path d="M49.6,217.8 L51.4,216.0 L51.4,217.8 Z" fill="#dedede"/>
<!-- graph -->
<path d="M55.8,209.4 L55.8,216.2 L64,216.2" stroke="#bdbdbd" stroke-width="0.7" fill="none"/>
<rect x="57" y="212.4" width="1.8" height="3.8" fill="#c8c8c8"/>
<rect x="59.4" y="210.4" width="1.8" height="5.8" fill="#c8c8c8"/>
<rect x="61.8" y="211.6" width="1.8" height="4.6" fill="#c8c8c8"/>
<path d="M64.4,217.8 L66.2,216.0 L66.2,217.8 Z" fill="#dedede"/>
<!-- artboard -->
<rect x="40.6" y="224" width="8.4" height="5.6" fill="#8c8c8c"/>
<path d="M39,224 L50.6,224 M39,229.6 L50.6,229.6 M41.6,222.4 L41.6,231 M48,222.4 L48,231" stroke="#c4c4c4" stroke-width="0.6"/>
<path d="M43,225.4 L43,228.4 M45,225.4 L45,228.4 M47,225.4 L47,228.4" stroke="#b0b0b0" stroke-width="0.5"/>
<!-- slice -->
<path d="M56.2,230 L57,228 L62.6,223.2 L64,224.6 L58.6,229.4 Z" fill="#c0c0c0"/>
<path d="M64.4,231.8 L66.2,230.0 L66.2,231.8 Z" fill="#dedede"/>
<!-- hand -->
<path d="M41,238.6 L40.4,237.6 Q40.6,236.6 41.6,237.4 L42.4,238.2 L42.2,234.8 Q42.8,234 43.4,234.8 L43.6,237 L43.8,234 Q44.4,233.4 45,234 L45,237 L45.4,234.6 Q46,234 46.6,234.8 L46.4,237.6 L46.8,236 Q47.4,235.6 47.8,236.4 L47.4,240 Q46.6,242.6 44.4,243 L43,243 Q41.6,241.6 41,238.6 Z" fill="#d2d2d2"/>
<path d="M49.6,243.8 L51.4,242.0 L51.4,243.8 Z" fill="#dedede"/>
<!-- zoom -->
<circle cx="59" cy="237.8" r="2.8" fill="#7c7c7c" stroke="#c8c8c8" stroke-width="0.8"/>
<path d="M61,240 L63.6,242.8" stroke="#c8c8c8" stroke-width="1.3"/>
<!-- fill / stroke -->
<rect x="46" y="256" width="18.4" height="18" fill="#f2f2f2" stroke="#262626" stroke-width="0.6"/>
<rect x="50.6" y="260.8" width="8.4" height="8.4" fill="#3c3c3c"/>
<path d="M46.2,273.8 L64.2,256.2" stroke="#e0141e" stroke-width="1"/>
<rect x="37" y="247" width="17.5" height="17.6" fill="#eeeeee" stroke="#262626" stroke-width="0.6"/>
<path d="M58.8,248.2 Q62.4,248 62.6,251.4" stroke="#cfcfcf" stroke-width="0.7" fill="none"/>
<path d="M58,248.2 L59.4,247.2 L59.4,249.2 Z M61.6,251 L63.6,251 L62.6,252.2 Z" fill="#cfcfcf"/>
<rect x="38.4" y="268.6" width="2.8" height="2.8" fill="#eee" stroke="#111" stroke-width="0.4"/>
<rect x="39.6" y="270" width="2.8" height="2.8" fill="#111" stroke="#ddd" stroke-width="0.4"/>
<!-- color modes -->
<rect x="38.6" y="278.4" width="8" height="8" fill="#2a2a2a"/>
<rect x="39.8" y="279.4" width="5.4" height="6" fill="#f4f4f4"/>
<rect x="48.6" y="278.4" width="8" height="8" fill="#2a2a2a"/>
<defs><linearGradient id="gmode" x1="0" x2="1"><stop offset="0" stop-color="#fafafa"/><stop offset="1" stop-color="#555"/></linearGradient></defs>
<rect x="49.6" y="279.4" width="5.8" height="6" fill="url(#gmode)"/>
<rect x="58.6" y="278.4" width="8" height="8" fill="#2a2a2a"/>
<rect x="59.4" y="279.4" width="6.2" height="6" fill="#f4f4f4"/>
<path d="M59.6,285.2 L65.4,279.6" stroke="#d8101c" stroke-width="1.1"/>
<!-- draw modes -->
<rect x="37.3" y="291.2" width="9.8" height="7.4" fill="#3a3a3a"/>
<rect x="48" y="291.2" width="9.8" height="7.4" fill="#4d4d4d"/>
<rect x="58.2" y="291.2" width="9.4" height="7.4" fill="#4d4d4d"/>
<circle cx="41.4" cy="294.2" r="1.6" fill="none" stroke="#d0d0d0" stroke-width="0.7"/>
<rect x="41.8" y="294.6" width="2.6" height="2.6" fill="#d0d0d0"/>
<circle cx="52.2" cy="294.4" r="1.8" fill="none" stroke="#9a9a9a" stroke-width="0.7"/>
<rect x="53" y="295" width="2.4" height="2.4" fill="none" stroke="#9a9a9a" stroke-width="0.6"/>
<path d="M61.2,293.6 L64.6,293.6 M61.2,295.6 L64.6,295.6" stroke="#666" stroke-width="0.6"/>
<!-- screen mode -->
<rect x="49" y="304" width="7.6" height="5.6" fill="#c0c0c0"/>
<rect x="46" y="306.2" width="5.4" height="5.4" fill="#555" stroke="#bdbdbd" stroke-width="0.6"/>
<rect x="50.2" y="305.2" width="5.6" height="3.4" fill="#777"/>
</g>

</svg>
</body></html>
